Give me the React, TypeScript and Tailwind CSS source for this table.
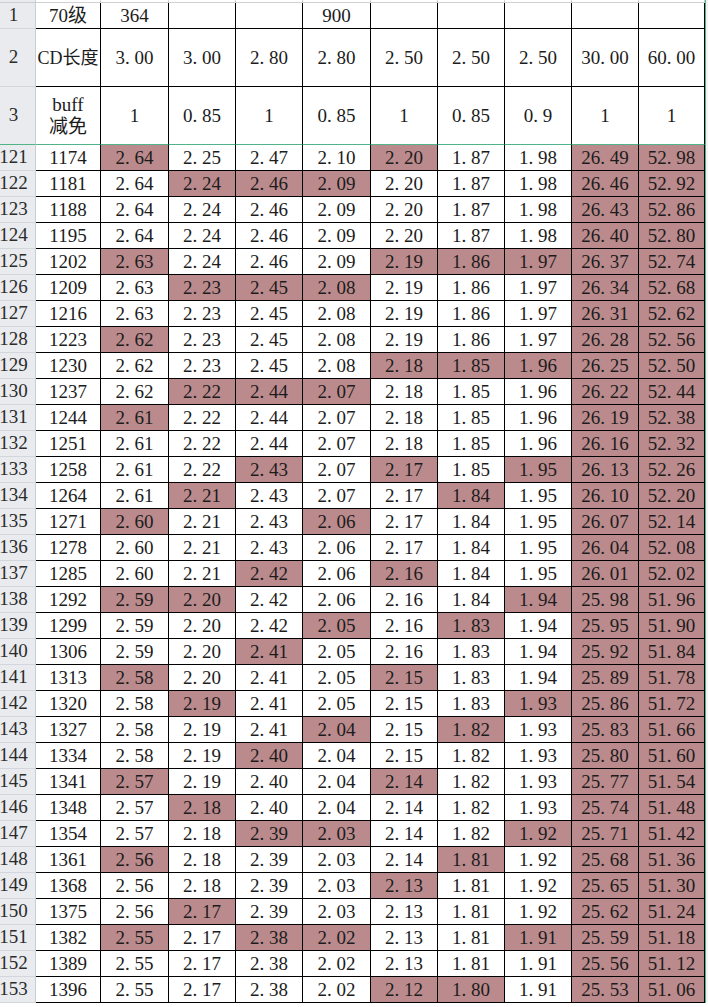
import React from "react";

// column widths, B..K (row-number column is separate)
const COL_W = [
  "w-[65px]",
  "w-[68px]",
  "w-[67px]",
  "w-[67px]",
  "w-[68px]",
  "w-[67px]",
  "w-[67px]",
  "w-[67px]",
  "w-[67px]",
  "w-[66px]",
];

// "*" marks a shaded cell
const ROWS: [number, string][] = [
  [121, "1174 2.64* 2.25 2.47 2.10 2.20* 1.87 1.98 26.49* 52.98*"],
  [122, "1181 2.64 2.24* 2.46* 2.09* 2.20 1.87 1.98 26.46* 52.92*"],
  [123, "1188 2.64 2.24 2.46 2.09 2.20 1.87 1.98 26.43* 52.86*"],
  [124, "1195 2.64 2.24 2.46 2.09 2.20 1.87 1.98 26.40* 52.80*"],
  [125, "1202 2.63* 2.24 2.46 2.09 2.19* 1.86* 1.97* 26.37* 52.74*"],
  [126, "1209 2.63 2.23* 2.45* 2.08* 2.19 1.86 1.97 26.34* 52.68*"],
  [127, "1216 2.63 2.23 2.45 2.08 2.19 1.86 1.97 26.31* 52.62*"],
  [128, "1223 2.62* 2.23 2.45 2.08 2.19 1.86 1.97 26.28* 52.56*"],
  [129, "1230 2.62 2.23 2.45 2.08 2.18* 1.85* 1.96* 26.25* 52.50*"],
  [130, "1237 2.62 2.22* 2.44* 2.07* 2.18 1.85 1.96 26.22* 52.44*"],
  [131, "1244 2.61* 2.22 2.44 2.07 2.18 1.85 1.96 26.19* 52.38*"],
  [132, "1251 2.61 2.22 2.44 2.07 2.18 1.85 1.96 26.16* 52.32*"],
  [133, "1258 2.61 2.22 2.43* 2.07 2.17* 1.85 1.95* 26.13* 52.26*"],
  [134, "1264 2.61 2.21* 2.43 2.07 2.17 1.84* 1.95 26.10* 52.20*"],
  [135, "1271 2.60* 2.21 2.43 2.06* 2.17 1.84 1.95 26.07* 52.14*"],
  [136, "1278 2.60 2.21 2.43 2.06 2.17 1.84 1.95 26.04* 52.08*"],
  [137, "1285 2.60 2.21 2.42* 2.06 2.16* 1.84 1.95 26.01* 52.02*"],
  [138, "1292 2.59* 2.20* 2.42 2.06 2.16 1.84 1.94* 25.98* 51.96*"],
  [139, "1299 2.59 2.20 2.42 2.05* 2.16 1.83* 1.94 25.95* 51.90*"],
  [140, "1306 2.59 2.20 2.41* 2.05 2.16 1.83 1.94 25.92* 51.84*"],
  [141, "1313 2.58* 2.20 2.41 2.05 2.15* 1.83 1.94 25.89* 51.78*"],
  [142, "1320 2.58 2.19* 2.41 2.05 2.15 1.83 1.93* 25.86* 51.72*"],
  [143, "1327 2.58 2.19 2.41 2.04* 2.15 1.82* 1.93 25.83* 51.66*"],
  [144, "1334 2.58 2.19 2.40* 2.04 2.15 1.82 1.93 25.80* 51.60*"],
  [145, "1341 2.57* 2.19 2.40 2.04 2.14* 1.82 1.93 25.77* 51.54*"],
  [146, "1348 2.57 2.18* 2.40 2.04 2.14 1.82 1.93 25.74* 51.48*"],
  [147, "1354 2.57 2.18 2.39* 2.03* 2.14 1.82 1.92* 25.71* 51.42*"],
  [148, "1361 2.56* 2.18 2.39 2.03 2.14 1.81* 1.92 25.68* 51.36*"],
  [149, "1368 2.56 2.18 2.39 2.03 2.13* 1.81 1.92 25.65* 51.30*"],
  [150, "1375 2.56 2.17* 2.39 2.03 2.13 1.81 1.92 25.62* 51.24*"],
  [151, "1382 2.55* 2.17 2.38* 2.02* 2.13 1.81 1.91* 25.59* 51.18*"],
  [152, "1389 2.55 2.17 2.38 2.02 2.13 1.81 1.91 25.56* 51.12*"],
  [153, "1396 2.55 2.17 2.38 2.02 2.12* 1.80* 1.91 25.53* 51.06*"],
];

// SimSun-style wide period
function Num({ v }: { v: string }) {
  const [a, b] = v.split(".");
  if (b === undefined) return <span className="whitespace-nowrap">{v}</span>;
  return (
    <span className="whitespace-nowrap">
      {a}
      <span className="inline-block w-[0.5em]">.</span>
      {b}
    </span>
  );
}

function RowHead({ n, green }: { n: number; green?: boolean }) {
  return (
    <div
      className={`w-[36px] shrink-0 bg-[#e9ebef] border-r border-b border-r-[#c9ced5] ${
        green ? "border-b-[#4fb48a]" : "border-b-[#d3d7dd]"
      } flex items-center justify-center pr-2 text-[#2b2b2b]`}
    >
      {n}
    </div>
  );
}

function Cell({ i, children, shade, green }: { i: number; children?: React.ReactNode; shade?: boolean; green?: boolean }) {
  return (
    <div
      className={`${COL_W[i]} shrink-0 border-r border-b border-r-black ${
        green ? "border-b-[#4fb48a]" : "border-b-black"
      } flex flex-col items-center justify-center leading-[22px] ${shade ? "bg-[#bb8a8c]" : "bg-white"}`}
    >
      {children}
    </div>
  );
}

function Edge() {
  return <div className="w-[3px] shrink-0 border-l border-[#4fb48a] bg-[#f3f3f3]" />;
}

export default function App() {
  const hdr2 = ["3.00", "3.00", "2.80", "2.80", "2.50", "2.50", "2.50", "30.00", "60.00"];
  const hdr3 = ["1", "0.85", "1", "0.85", "1", "0.85", "0.9", "1", "1"];

  return (
    <div
      className="w-[708px] h-[1007px] overflow-hidden bg-white text-[19px] text-[#1c1c1c]"
      style={{ fontFamily: '"Liberation Serif", "Noto Sans CJK SC", serif' }}
    >
      {/* partial row above */}
      <div className="flex h-[3px]">
        <div className="w-[36px] shrink-0 bg-[#e9ebef] border-r border-b border-[#c9ced5]" />
        {COL_W.map((w, i) => (
          <div key={i} className={`${w} shrink-0 border-r border-b border-[#d0d0d0]`} />
        ))}
        <Edge />
      </div>

      {/* row 1 */}
      <div className="flex h-[26px]">
        <RowHead n={1} />
        <Cell i={0}>
          <span className="whitespace-nowrap">70级</span>
        </Cell>
        <Cell i={1}>364</Cell>
        <Cell i={2} />
        <Cell i={3} />
        <Cell i={4}>900</Cell>
        <Cell i={5} />
        <Cell i={6} />
        <Cell i={7} />
        <Cell i={8} />
        <Cell i={9} />
        <Edge />
      </div>

      {/* row 2 */}
      <div className="flex h-[58px]">
        <RowHead n={2} />
        <Cell i={0}>
          <span className="whitespace-nowrap text-[18px]">CD长度</span>
        </Cell>
        {hdr2.map((v, k) => (
          <Cell key={k} i={k + 1}>
            <Num v={v} />
          </Cell>
        ))}
        <Edge />
      </div>

      {/* row 3 */}
      <div className="flex h-[58px]">
        <RowHead n={3} green />
        <Cell i={0} green>
          <span>buff</span>
          <span>减免</span>
        </Cell>
        {hdr3.map((v, k) => (
          <Cell key={k} i={k + 1} green>
            <Num v={v} />
          </Cell>
        ))}
        <Edge />
      </div>

      {ROWS.map(([n, line]) => {
        const vals = line.split(" ");
        return (
          <div key={n} className="flex h-[26px]">
            <RowHead n={n} />
            {vals.map((raw, k) => {
              const shade = raw.endsWith("*");
              const v = shade ? raw.slice(0, -1) : raw;
              return (
                <Cell key={k} i={k} shade={shade}>
                  <Num v={v} />
                </Cell>
              );
            })}
            <Edge />
          </div>
        );
      })}
    </div>
  );
}
